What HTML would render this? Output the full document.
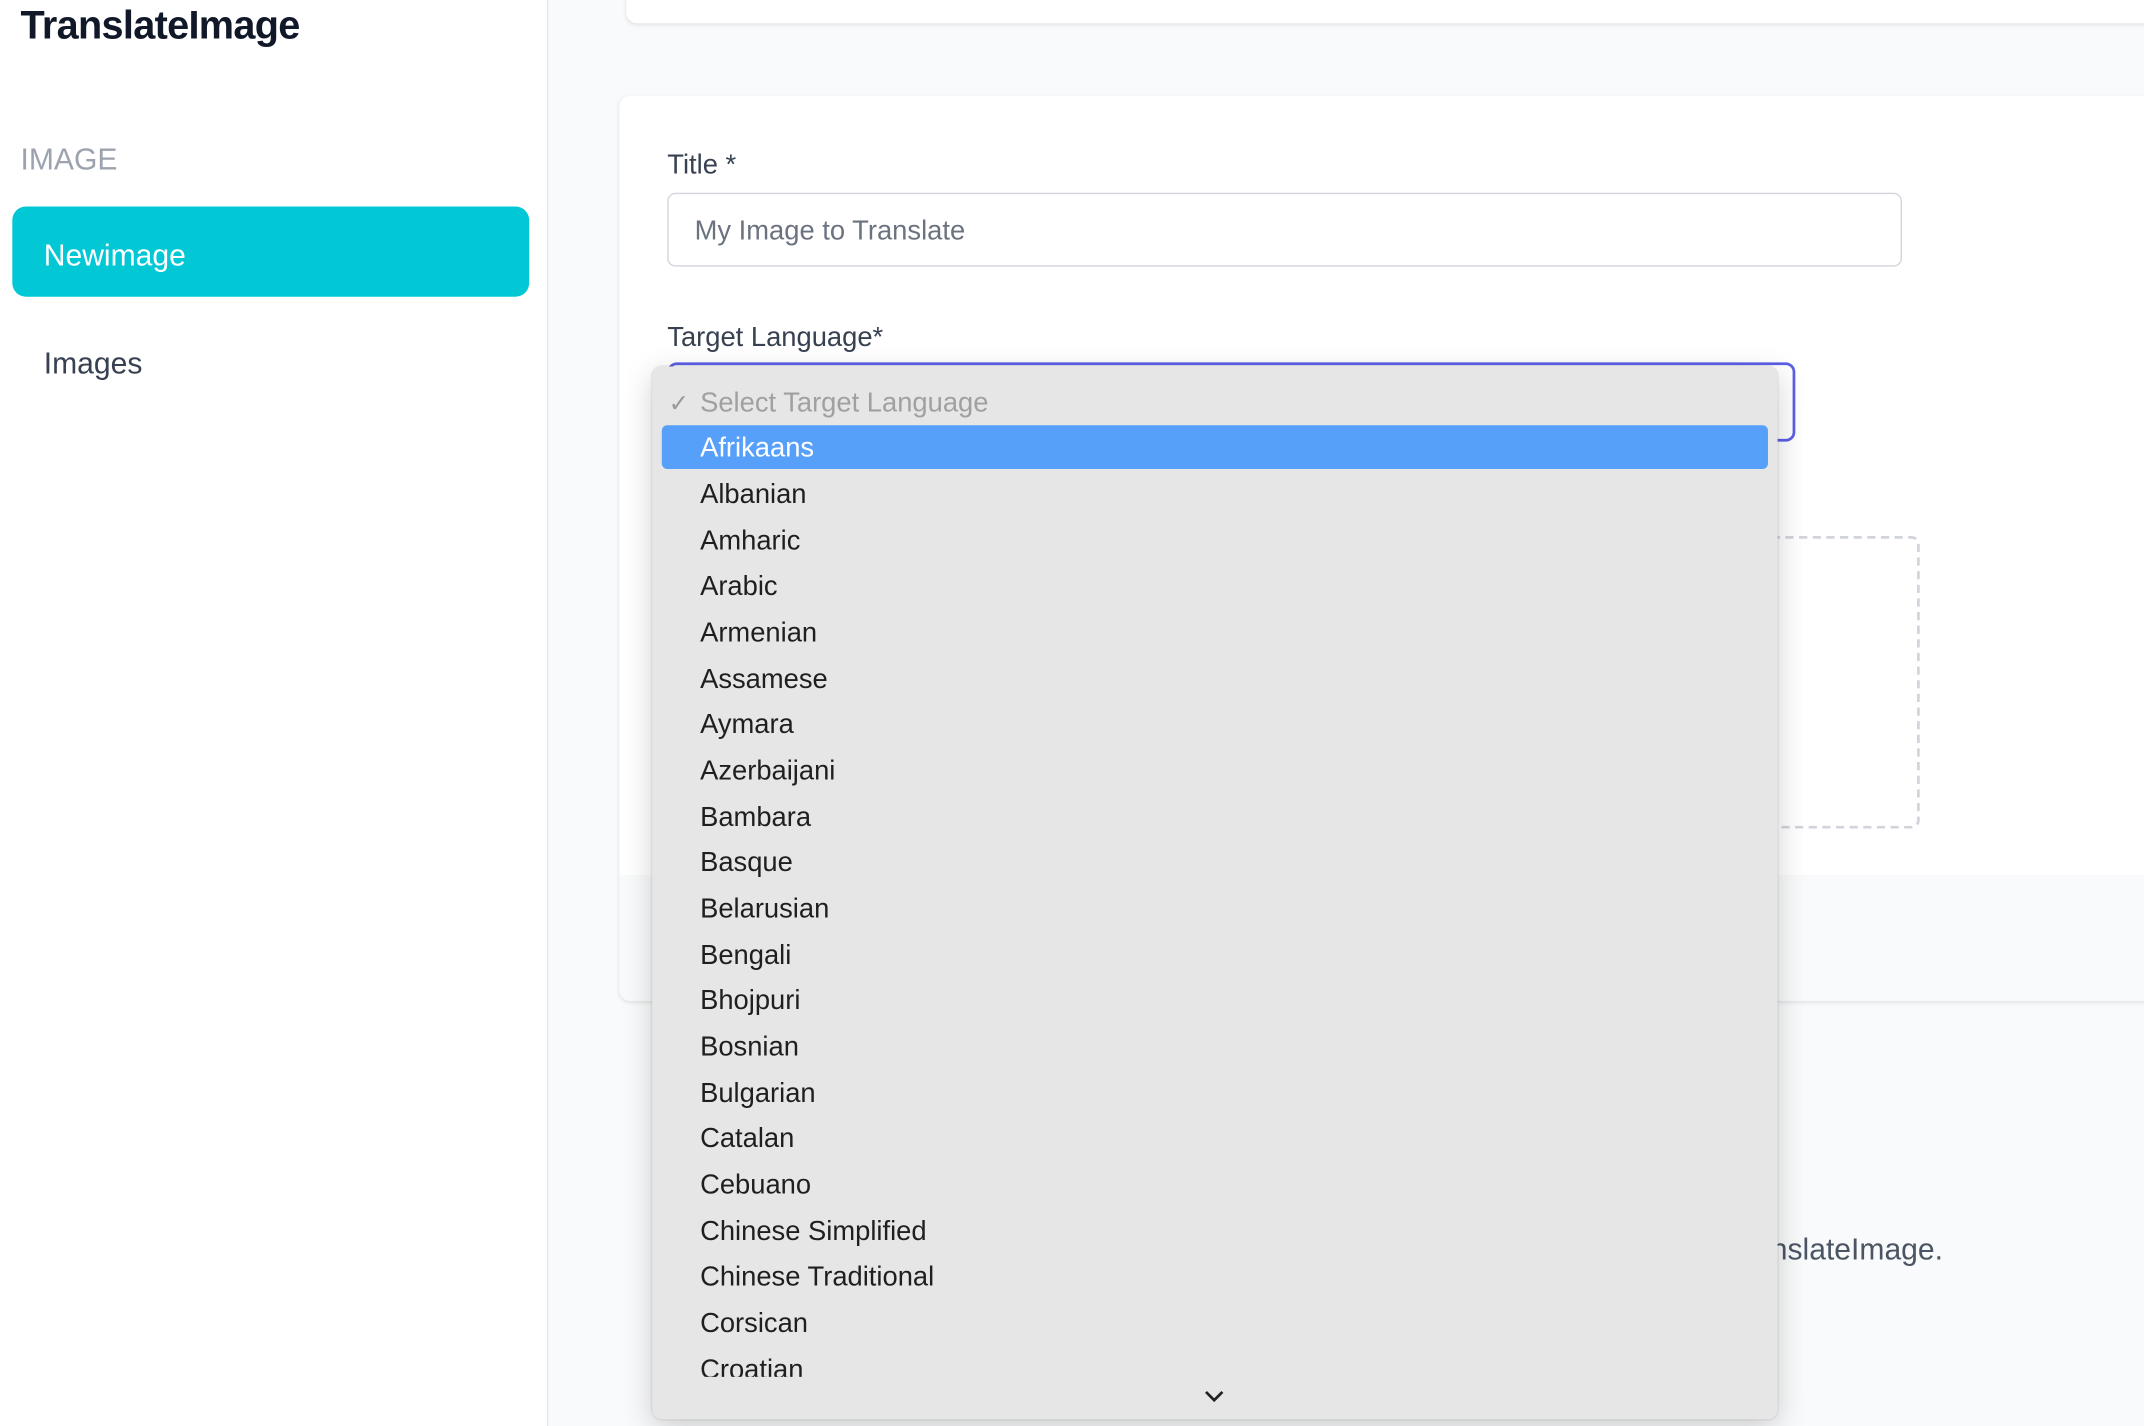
<!DOCTYPE html>
<html><head><meta charset="utf-8"><style>
html,body{margin:0;padding:0;width:2144px;height:1426px;overflow:hidden;background:#f9fafb;font-family:"Liberation Sans",sans-serif}
#w{position:absolute;left:0;top:0;width:1568px;height:1043px;transform:scale(1.36735);transform-origin:0 0;background:#f9fafb}
.a{position:absolute;white-space:nowrap}
#side{position:absolute;left:0;top:0;width:400px;height:1043px;background:#fff;border-right:1px solid #e5e7eb}
.dd{position:absolute;left:477px;top:268px;width:823px;height:770px;background:#e6e6e6;border-radius:7px;box-shadow:0 6px 22px rgba(0,0,0,.18),0 0 0 1px rgba(0,0,0,.06);overflow:hidden}
.it{position:absolute;left:35px;font-size:20px;color:#1f1f1f;line-height:24px}
</style></head><body><div id="w">
<div id="side">
<div class="a" style="left:15px;top:3px;font-size:29px;font-weight:bold;color:#111827;letter-spacing:-0.5px">TranslateImage</div>
<div class="a" style="left:15px;top:104px;font-size:22px;color:#9ca3af">IMAGE</div>
<div class="a" style="left:9px;top:151px;width:378px;height:66px;background:#02c8d6;border-radius:10px"></div>
<div class="a" style="left:32px;top:174px;font-size:22px;color:#fff">Newimage</div>
<div class="a" style="left:32px;top:253px;font-size:22px;color:#374151">Images</div>
</div>
<div class="a" style="left:458px;top:-20px;width:1130px;height:37px;background:#fff;border-radius:8px;box-shadow:0 1px 3px rgba(0,0,0,.1)"></div>
<div class="a" style="left:453px;top:70px;width:1135px;height:662px;background:#fff;border-radius:8px;box-shadow:0 1px 3px rgba(0,0,0,.1);overflow:hidden">
<div class="a" style="left:0;top:570px;width:1135px;height:92px;background:#f9fafb"></div>
</div>
<div class="a" style="left:488px;top:110px;font-size:20px;color:#374151">Title *</div>
<div class="a" style="left:488px;top:141px;width:901px;height:52px;border:1px solid #d1d5db;border-radius:6px;background:#fff"></div>
<div class="a" style="left:508px;top:158px;font-size:20px;color:#6b7280">My Image to Translate</div>
<div class="a" style="left:488px;top:236px;font-size:20px;color:#374151">Target Language*</div>
<div class="a" style="left:488px;top:265px;width:821px;height:54px;border:2px solid #5b5fe6;border-radius:7px;background:#fff"></div>
<div class="a" style="left:1200px;top:392px;width:200px;height:210px;border:2px dashed #d1d5db;border-radius:6px"></div>
<div class="a" style="right:147px;top:901px;font-size:22px;color:#4b5563">to TranslateImage.</div>
<div class="dd">
<div class="a" style="left:12px;top:17px;font-size:18px;color:#9a9a9a">✓</div>
<div class="it" style="top:15px;color:#a0a0a0">Select Target Language</div>
<div class="a" style="left:7px;top:43px;width:809px;height:32px;background:#57a0fa;border-radius:4px"></div>
<div class="it" style="top:48px;color:#fff">Afrikaans</div>
<div class="it" style="top:82px">Albanian</div>
<div class="it" style="top:116px">Amharic</div>
<div class="it" style="top:149px">Arabic</div>
<div class="it" style="top:183px">Armenian</div>
<div class="it" style="top:217px">Assamese</div>
<div class="it" style="top:250px">Aymara</div>
<div class="it" style="top:284px">Azerbaijani</div>
<div class="it" style="top:318px">Bambara</div>
<div class="it" style="top:351px">Basque</div>
<div class="it" style="top:385px">Belarusian</div>
<div class="it" style="top:419px">Bengali</div>
<div class="it" style="top:452px">Bhojpuri</div>
<div class="it" style="top:486px">Bosnian</div>
<div class="it" style="top:520px">Bulgarian</div>
<div class="it" style="top:553px">Catalan</div>
<div class="it" style="top:587px">Cebuano</div>
<div class="it" style="top:621px">Chinese Simplified</div>
<div class="it" style="top:654px">Chinese Traditional</div>
<div class="it" style="top:688px">Corsican</div>
<div style="position:absolute;left:0;top:700px;width:823px;height:39px;overflow:hidden"><div class="it" style="top:22px">Croatian</div></div>
<svg class="a" style="left:403px;top:747px" width="16" height="12" viewBox="0 0 16 12"><path d="M2 3 L8 9 L14 3" fill="none" stroke="#222" stroke-width="2"/></svg>
</div>
</div></body></html>
